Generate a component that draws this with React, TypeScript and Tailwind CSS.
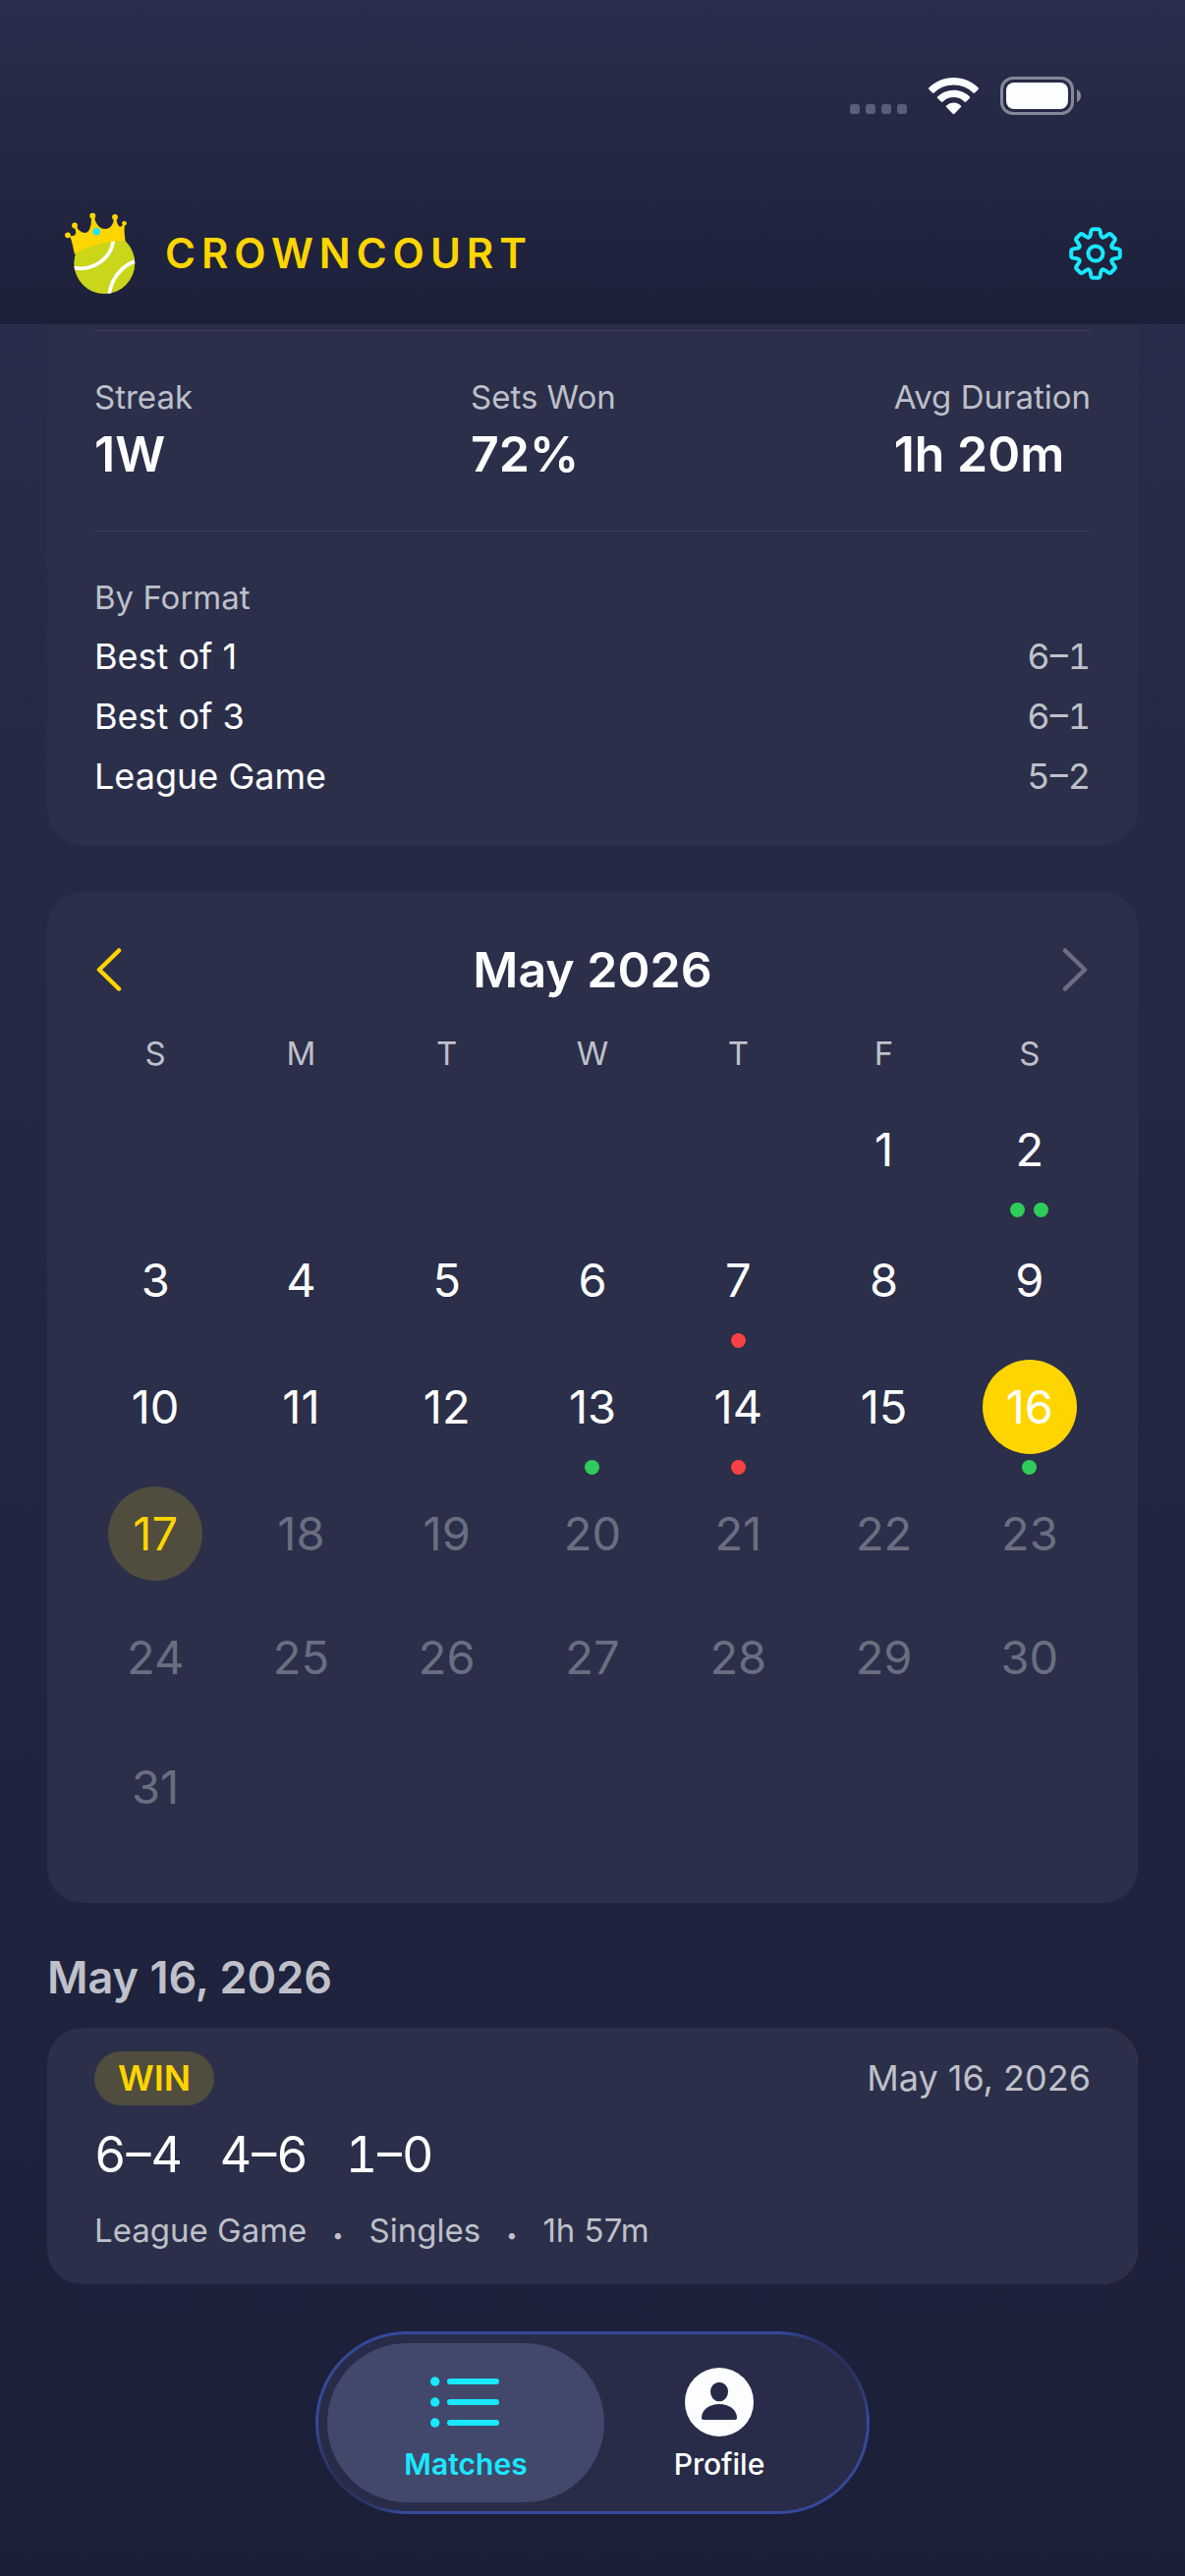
const stats = [
  { label: 'Streak', value: '1W' },
  { label: 'Sets Won', value: '72%' },
  { label: 'Avg Duration', value: '1h 20m' },
];

const formats = [
  { name: 'Best of 1', record: '6–1' },
  { name: 'Best of 3', record: '6–1' },
  { name: 'League Game', record: '5–2' },
];

const weekdays = ['S', 'M', 'T', 'W', 'T', 'F', 'S'];

// match results by day of the month
const results: Record<number, string[]> = {
  2: ['win', 'win'],
  7: ['loss'],
  13: ['win'],
  14: ['loss'],
  16: ['win'],
};

const FIRST_WEEKDAY = 5;
const DAYS = 31;
const SELECTED = 16;
const TODAY = 17;

function StatusBar() {
  return (
    <div className="flex h-[180px] items-start justify-end gap-[22px] pt-[78px] pr-[106px]">
      <svg className="mt-7 h-[10px] w-[58px]" viewBox="0 0 58 10" fill="#5b5e7a">
        {[0, 16, 32, 48].map((x) => (
          <rect key={x} x={x} width="10" height="10" rx="3" />
        ))}
      </svg>
      <svg className="mt-px h-[38px] w-[51px]" viewBox="0 0 51 38" fill="#fcfdff">
        <path d="M25.500 0C35.300 0 44.200 3.900 50.600 10.200c.5.500.5 1.200 0 1.700l-3.500 3.500c-.5.500-1.200.5-1.700 0A28.400 28.400 0 0 0 25.500 7.500 28.400 28.400 0 0 0 5.600 15.400c-.5.500-1.200.5-1.700 0L.4 11.900c-.5-.5-.5-1.200 0-1.700C6.800 3.900 15.700 0 25.500 0Z" />
        <path d="M25.500 12.700c6.300 0 12 2.500 16.300 6.500.5.500.5 1.200 0 1.700l-3.600 3.600c-.5.500-1.200.5-1.700 0a16 16 0 0 0-22 0c-.5.500-1.200.5-1.700 0l-3.600-3.600c-.5-.5-.5-1.200 0-1.700a23.800 23.800 0 0 1 16.300-6.500Z" />
        <path d="M25.500 25.600c2.800 0 5.400 1.100 7.400 2.800.5.500.5 1.200 0 1.700l-6.500 6.600c-.5.500-1.300.5-1.800 0l-6.500-6.600c-.5-.5-.5-1.200 0-1.700a11.300 11.300 0 0 1 7.400-2.800Z" />
      </svg>
      <svg className="h-[39px] w-[82px]" viewBox="0 0 82 39">
        <rect x="1.500" y="1.500" width="72" height="36" rx="11.500" fill="none" stroke="#868899" strokeWidth="3" />
        <rect x="6" y="6" width="63" height="27" rx="8" fill="#fcfdff" />
        <path d="M78 13c2.500 1 4 3.500 4 6.500s-1.500 5.500-4 6.500Z" fill="#868899" />
      </svg>
    </div>
  );
}

function Logo() {
  return (
    <svg className="h-[84px] w-[72px]" viewBox="0 0 72 84" aria-hidden="true">
      <defs>
        <clipPath id="ball">
          <circle cx="40.300" cy="52" r="31" />
        </clipPath>
      </defs>
      <circle cx="40.300" cy="52" r="31" fill="#c9d61a" />
      <g clipPath="url(#ball)" fill="none">
        <g stroke="#f2d400" strokeWidth="1" strokeLinecap="round" strokeDasharray="0 2.600">
          <path d="M12 45Q26 35 46 33" />
          <path d="M12 48Q26 38 44 35.500" />
          <path d="M20 46Q28 40 38 38.500" />
        </g>
        <g stroke="#fff" strokeWidth="3.800">
          <path d="M8 56.200C27 61 47 48 49.300 29" />
          <path d="M73 49.500C60 53 47.500 66 45 84" />
        </g>
      </g>
      <path
        d="M10 43C8.500 37 7.500 30 5.500 25.500L4 24C8 24.500 11 24 11.200 21C11.300 18 9.500 16 9 14L12 15C13.500 18 17 21.300 21.300 21C26 20 27 12 27 5H30C31 10 34 16.800 41 17C47 16.500 49.500 12 50 6L52.500 6C52.800 10 54 14.500 56.500 14.700C58.500 14.500 59 13 59.500 11.500L61 13C60 18 60.800 24 61.700 29.400C44 29 25 33 10 43Z"
        fill="#ffd500"
      />
      <g fill="#ffd500">
        <circle cx="3" cy="23.300" r="2.900" />
        <circle cx="10" cy="13.500" r="2.900" />
        <circle cx="28.300" cy="3.700" r="3" />
        <circle cx="51" cy="5" r="2.900" />
        <circle cx="60.500" cy="11.300" r="2.400" />
      </g>
      <circle cx="32.300" cy="19.700" r="3.700" fill="#19e8ff" />
    </svg>
  );
}

function GearIcon() {
  // one tooth and valley, repeated every 45 degrees
  return (
    <svg className="h-[56px] w-[56px]" viewBox="-28 -28 56 56" fill="none" stroke="#19e8ff" strokeWidth="4" strokeLinejoin="round" strokeLinecap="round">
      {[0, 45, 90, 135, 180, 225, 270, 315].map((angle) => (
        <path
          key={angle}
          transform={`rotate(${angle})`}
          d="M-7.200 -16.400C-6.300 -16.700 -5.600 -17.600 -5.300 -18.900L-4.600 -22.800C-4.300 -24.200 -3.700 -24.800 -2.500 -24.800H2.500C3.700 -24.800 4.300 -24.200 4.600 -22.800L5.300 -18.900C5.600 -17.600 6.300 -16.700 7.200 -16.400"
        />
      ))}
      <circle r="7.500" />
    </svg>
  );
}

function Header() {
  return (
    <header className="h-[330px] bg-linear-to-b from-[#2a2e4c] to-[#1c2039]">
      <StatusBar />
      <div className="flex items-center justify-between pt-9 pr-[63px] pl-[66px]">
        <div className="flex items-center gap-[30px]">
          <Logo />
          <h1 className="text-[42px] leading-[52px] font-semibold tracking-[6px] text-[#ffd500]">CROWNCOURT</h1>
        </div>
        <button aria-label="Settings">
          <GearIcon />
        </button>
      </div>
    </header>
  );
}

function StatsCard() {
  return (
    <section className="rounded-b-[36px] bg-[#2b2f4a] px-12 pt-[6px] pb-[47px]">
      <div className="flex justify-between border-t border-[#3c3f57] pt-[46px] pb-12">
        {stats.map((stat) => (
          <div key={stat.label}>
            <div className="text-[33px] leading-[42px] text-[#bfc0c9]">{stat.label}</div>
            <div className="mt-[7px] text-[50px] leading-[60px] font-semibold">{stat.value}</div>
          </div>
        ))}
      </div>
      <div className="border-t border-[#3c3f57] pt-[46px]">
        <h2 className="text-[33px] leading-[42px] text-[#bfc0c9]">By Format</h2>
        <dl className="pt-px">
          {formats.map((format) => (
            <div key={format.name} className="mt-4 flex justify-between text-[36px] leading-[45px]">
              <dt>{format.name}</dt>
              <dd className="text-[#bfc0c9] tabular-nums">{format.record}</dd>
            </div>
          ))}
        </dl>
      </div>
    </section>
  );
}

function DayCell({ day }: { day: number }) {
  let style = 'text-white';
  if (day === SELECTED) style = 'bg-[#ffd500] text-white';
  else if (day === TODAY) style = 'bg-[#504d3e] text-[#ffd500]';
  else if (day > TODAY) style = 'text-[#6b6e80]';

  return (
    <div className="flex flex-col items-center gap-[6px]">
      <button className={`h-24 w-24 rounded-full text-[47px] leading-[96px] ${style}`}>{day}</button>
      <div className="flex gap-[9px]">
        {(results[day] || []).map((result, i) => (
          <span
            key={i}
            className={`h-[15px] w-[15px] rounded-full ${result === 'win' ? 'bg-[#30cc5a]' : 'bg-[#fa4143]'}`}
          />
        ))}
      </div>
    </div>
  );
}

function Calendar() {
  return (
    <section className="mt-12 rounded-[36px] bg-[#2b2f4a] px-12 pt-12 pb-12">
      <div className="flex h-[62px] items-center justify-between">
        <button aria-label="Previous month">
          <svg className="h-[44px] w-[30px]" viewBox="0 0 30 44" fill="none" stroke="#ffd500" strokeWidth="4.500" strokeLinecap="round" strokeLinejoin="round">
            <path d="M25 2.500 5 22 25 41.500" />
          </svg>
        </button>
        <h2 className="text-[50px] leading-[62px] font-semibold">May 2026</h2>
        <button aria-label="Next month" disabled>
          <svg className="h-[44px] w-[30px]" viewBox="0 0 30 44" fill="none" stroke="#6b6e80" strokeWidth="4.500" strokeLinecap="round" strokeLinejoin="round">
            <path d="M4 2.500 24 22 4 41.500" />
          </svg>
        </button>
      </div>
      <div className="mt-[33px] grid grid-cols-7 gap-x-6 text-center text-[33px] leading-[42px] text-[#bfc0c9]">
        {weekdays.map((name, i) => (
          <div key={i}>{name}</div>
        ))}
      </div>
      <div className="mt-[29px] grid grid-cols-7 grid-rows-[133px_129px_129px_126px_132px_118px] gap-x-6">
        {Array.from({ length: FIRST_WEEKDAY }, (_, i) => (
          <div key={`blank-${i}`} />
        ))}
        {Array.from({ length: DAYS }, (_, i) => (
          <DayCell key={i} day={i + 1} />
        ))}
      </div>
    </section>
  );
}

function MatchCard() {
  return (
    <div className="rounded-[36px] bg-linear-to-r from-transparent from-90% to-[#ffd500]/40">
      <article className="rounded-[36px] bg-[#2b2f4a] px-12 pt-6 pb-8">
        <div className="flex items-center justify-between">
          <span className="rounded-full bg-[#504d3e] px-6 py-[6px] text-[36px] leading-[43px] font-semibold text-[#ffd500]">WIN</span>
          <time className="text-[36px] leading-[43px] text-[#bfc0c9]">May 16, 2026</time>
        </div>
        <div className="mt-5 flex gap-[38px] text-[50px] leading-[60px] tabular-nums">
          <span>6–4</span>
          <span>4–6</span>
          <span>1–0</span>
        </div>
        <div className="mt-[26px] mb-[2px] flex items-baseline gap-[26px] text-[33px] leading-[42px] text-[#bfc0c9]">
          <span>League Game</span>
          <span className="text-xl">•</span>
          <span>Singles</span>
          <span className="text-xl">•</span>
          <span>1h 57m</span>
        </div>
      </article>
    </div>
  );
}

function TabBar() {
  return (
    <nav className="mx-auto mt-12 w-[564px] rounded-full bg-[linear-gradient(45deg,#242a4c_6%,#36489a_12%,#36489a_88%,#242a4c_94%)] p-[3px]">
      <div className="flex rounded-full bg-[#282c48] p-[9px]">
        <a href="#matches" className="flex h-[162px] w-[282px] flex-col items-center rounded-full bg-[#41486c] pt-[33px] text-[#19e8ff]">
          <svg className="h-[54px] w-[72px]" viewBox="0 0 72 54" fill="currentColor">
            {[6, 27, 48].map((y) => (
              <g key={y}>
                <circle cx="4.700" cy={y} r="4.700" />
                <rect x="17" y={y - 3} width="53" height="6" rx="3" />
              </g>
            ))}
          </svg>
          <span className="mt-[18px] text-[30px] leading-[36px] font-semibold">Matches</span>
        </a>
        <a href="#profile" className="-ml-6 flex h-[162px] w-[282px] flex-col items-center pt-[25px]">
          <svg className="h-[70px] w-[70px]" viewBox="0 0 70 70">
            <circle cx="35" cy="35" r="35" fill="#fcfdff" />
            <ellipse cx="35" cy="24.500" rx="9" ry="9.800" fill="#262a46" />
            <path d="M17 51c0-8.500 8.500-14 18-14s18 5.500 18 14c0 1.300-.7 2-2 2H19c-1.300 0-2-.7-2-2Z" fill="#262a46" />
          </svg>
          <span className="mt-[10px] text-[30px] leading-[36px] font-medium">Profile</span>
        </a>
      </div>
    </nav>
  );
}

export default function App() {
  return (
    <div className="min-h-screen bg-linear-to-b from-[#2a2e4c] to-[#1b1f38] font-[Inter,'Liberation_Sans',sans-serif] text-white">
      <Header />
      <main className="px-12">
        <StatsCard />
        <Calendar />
        <h2 className="mt-12 mb-[23px] text-[45px] leading-[56px] font-semibold text-[#bfc0c9]">May 16, 2026</h2>
        <MatchCard />
      </main>
      <TabBar />
    </div>
  );
}
